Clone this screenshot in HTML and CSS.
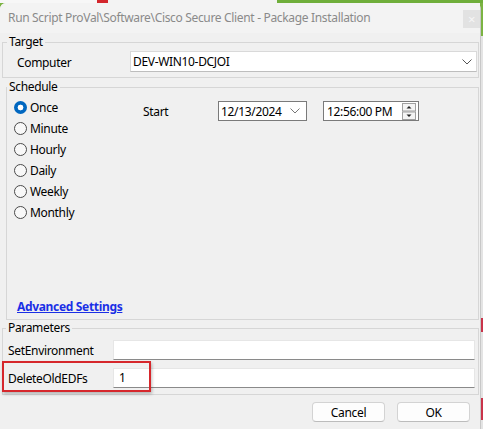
FILE: index.html
```html
<!DOCTYPE html>
<html>
<head>
<meta charset="utf-8">
<link rel="stylesheet" href="styles.css">
</head>
<body>
<div class="topstrip"></div>
<div class="dialog">
  <div class="titlebar">
    <span class="title">Run Script ProVal\Software\Cisco Secure Client - Package Installation</span>
    <span class="close">×</span>
  </div>

  <fieldset class="group target">
    <legend>Target</legend>
    <div class="target-row">
      <span class="target-lbl">Computer</span>
      <div class="combo">
        <span>DEV-WIN10-DCJOI</span>
        <svg class="chev" width="10" height="6" viewBox="0 0 10 6"><polyline points="0.5,0.5 5,5 9.5,0.5" fill="none" stroke="#555" stroke-width="1"/></svg>
      </div>
    </div>
  </fieldset>

  <fieldset class="group schedule">
    <legend>Schedule</legend>
    <div class="sched-body">
      <div class="radios">
        <div class="radio-row"><span class="radio checked"></span><span>Once</span></div>
        <div class="radio-row"><span class="radio"></span><span>Minute</span></div>
        <div class="radio-row"><span class="radio"></span><span>Hourly</span></div>
        <div class="radio-row"><span class="radio"></span><span>Daily</span></div>
        <div class="radio-row"><span class="radio"></span><span>Weekly</span></div>
        <div class="radio-row"><span class="radio"></span><span>Monthly</span></div>
      </div>
      <div class="start-row">
        <span class="start-lbl">Start</span>
        <div class="date">
          <span>12/13/2024</span>
          <svg class="chev" width="10" height="6" viewBox="0 0 10 6"><polyline points="0.5,0.5 5,5 9.5,0.5" fill="none" stroke="#777" stroke-width="1"/></svg>
        </div>
        <div class="time">
          <span>12:56:00 PM</span>
          <svg class="spin" width="14" height="17" viewBox="0 0 14 17">
            <rect x="0.5" y="0.5" width="13" height="7.5" fill="#f4f4f4" stroke="#a0a0a0"/>
            <rect x="0.5" y="9" width="13" height="7.5" fill="#f4f4f4" stroke="#a0a0a0"/>
            <polygon points="4.5,5.5 9.5,5.5 7,3" fill="#222"/>
            <polygon points="4.5,11.5 9.5,11.5 7,14" fill="#222"/>
          </svg>
        </div>
      </div>
    </div>
    <a class="adv" href="#">Advanced Settings</a>
  </fieldset>

  <fieldset class="group params">
    <legend>Parameters</legend>
    <div class="param-row">
      <span class="plbl">SetEnvironment</span>
      <div class="pinput"></div>
    </div>
    <div class="param-row">
      <span class="plbl">DeleteOldEDFs</span>
      <div class="pinput">1</div>
      <div class="highlight"></div>
    </div>
  </fieldset>

  <div class="buttons">
    <button class="btn">Cancel</button>
    <button class="btn">OK</button>
  </div>
</div>
</body>
</html>
```

FILE: styles.css
```css
* { box-sizing: border-box; }

html, body {
  margin: 0;
  padding: 0;
}

body {
  width: 483px;
  height: 429px;
  overflow: hidden;
  font-family: "Noto Sans", "Open Sans", sans-serif;
  font-size: 12px;
  letter-spacing: -0.33px;
  color: #000;
  background: linear-gradient(to bottom, #7bb342 0 36px, #e4e4e4 36px 318px, #c9334a 318px 332px, #e4e4e4 332px 398px, #c9334a 398px 420px, #e4e4e4 420px);
}

.topstrip {
  height: 3px;
  background: linear-gradient(to right, #f7f7f7 0 97px, #d3262c 97px 108px, #f3f3f3 108px 277px, #6fae3a 277px);
}

.dialog {
  width: 481px;
  height: 426px;
  background: #f0f0f0;
  border-right: 1px solid #c8c8c8;
  border-top-left-radius: 6px;
  border-top-right-radius: 6px;
  display: flex;
  flex-direction: column;
}

.titlebar {
  height: 30px;
  display: flex;
  align-items: flex-start;
  justify-content: space-between;
  background: #f3f3f3;
  border-top-left-radius: 6px;
}

.title {
  color: #8a8a8a;
  margin-left: 8px;
  margin-top: 7px;
  line-height: 16px;
  white-space: nowrap;
}

.close {
  width: 17px;
  height: 18px;
  margin-top: 7px;
  background: #e2e2e2;
  color: #f6f6f6;
  font-size: 13px;
  line-height: 18px;
  text-align: center;
}

.group {
  margin: 0;
  padding: 0;
  border: 1px solid #d6d6d6;
  min-width: 0;
}

.group legend {
  padding: 0 2px;
  line-height: 16px;
  height: 16px;
}

/* Target */
.target {
  margin: 1px 1px 0 2px;
  padding: 1px 1px 5px 0;
}
.target legend { margin-left: 4px; }

.target-row {
  display: flex;
  align-items: center;
  height: 21px;
}

.target-lbl {
  width: 127px;
  padding-left: 14px;
  padding-top: 2px;
}

.combo {
  flex: 1;
  height: 21px;
  background: #fff;
  border: 1px solid #d9d9d9;
  border-bottom-color: #bdbdbd;
  display: flex;
  align-items: center;
  justify-content: space-between;
  padding: 0 4px 0 2px;
}

.chev { display: block; }

/* Schedule */
.schedule {
  margin: 1px 1px 0 6px;
  padding: 2px 0 4px 0;
}
.schedule legend { margin-left: 0; }

.sched-body {
  display: flex;
  align-items: flex-start;
}

.radios {
  width: 136px;
  padding-left: 7px;
  display: flex;
  flex-direction: column;
}

.radio-row {
  height: 21px;
  display: flex;
  align-items: center;
  gap: 3px;
}

.radio {
  width: 13px;
  height: 13px;
  border-radius: 50%;
  border: 1px solid #4a4a4a;
  background: #f8f8f8;
  flex: none;
}

.radio.checked {
  border: none;
  background: radial-gradient(circle, #fff 0 2.6px, #0067c0 3.2px);
}

.start-row {
  display: flex;
  align-items: center;
  margin-top: 4px;
}

.start-lbl {
  width: 75px;
}

.date, .time {
  height: 20px;
  background: #fff;
  border: 1px solid #7a7a7a;
  display: flex;
  align-items: center;
  justify-content: space-between;
}

.date {
  width: 89px;
  padding: 0 6px 0 2px;
}

.time {
  width: 96px;
  margin-left: 16px;
  padding: 0 2px 0 3px;
}

.adv {
  display: block;
  margin: 76px 0 0 10px;
  width: max-content;
  line-height: 16px;
  font-weight: bold;
  color: #1a2fe6;
  text-decoration: underline;
}

/* Parameters */
.params {
  margin: 0 1px 0 2px;
  padding: 4px 3px 6px 0;
}
.params legend { margin-left: 3px; }

.param-row {
  position: relative;
  display: flex;
  align-items: center;
  height: 20px;
}

.param-row + .param-row { margin-top: 8px; }

.plbl {
  width: 110px;
  padding-left: 5px;
}

.pinput {
  flex: 1;
  height: 20px;
  background: #fff;
  border: 1px solid #e6e6e6;
  border-bottom-color: #8a8a8a;
  padding: 0 0 0 5px;
  line-height: 18px;
}

.highlight {
  position: absolute;
  left: -1px;
  top: -7px;
  width: 149px;
  height: 31px;
  border: 2px solid #d6272c;
  box-shadow: 1px 2px 3px rgba(0, 0, 0, 0.25);
  pointer-events: none;
}

/* Buttons */
.buttons {
  display: flex;
  justify-content: flex-end;
  gap: 12px;
  margin-top: 7px;
  padding-right: 10px;
}

.btn {
  width: 73px;
  height: 20px;
  padding: 0;
  font-family: inherit;
  font-size: 12px;
  letter-spacing: inherit;
  color: #000;
  background: #fdfdfd;
  border: 1px solid #d3d3d3;
  border-bottom-color: #bcbcbc;
  border-radius: 4px;
}
```
